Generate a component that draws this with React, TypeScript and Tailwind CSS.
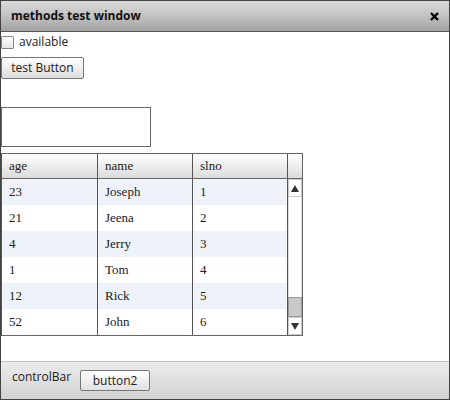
import React from "react";

const rows = [
  { age: "23", name: "Joseph", slno: "1" },
  { age: "21", name: "Jeena", slno: "2" },
  { age: "4", name: "Jerry", slno: "3" },
  { age: "1", name: "Tom", slno: "4" },
  { age: "12", name: "Rick", slno: "5" },
  { age: "52", name: "John", slno: "6" },
];

export default function App() {
  return (
    <div className="w-[450px] h-[400px] flex flex-col border border-[#444] bg-white font-['Open_Sans',sans-serif] text-[12px] text-[#222]">
      {/* title bar */}
      <div className="h-[31px] shrink-0 flex items-center justify-between pl-[10px] pr-[10px] border-b border-[#555] bg-gradient-to-b from-[#dadada] via-[#c2c2c2] to-[#a2a2a2]">
        <span className="font-bold text-[12px] text-[#111]">methods test window</span>
        <svg width="9" height="9" viewBox="0 0 9 9">
          <path d="M1 1 L8 8 M8 1 L1 8" stroke="#000" strokeWidth="2.4" />
        </svg>
      </div>

      {/* body */}
      <div className="flex-1 flex flex-col">
        <label className="flex items-center gap-[5px] mt-[2px] h-[16px]">
          <span className="w-[13px] h-[13px] border border-[#888] bg-gradient-to-b from-white to-[#e6e6e6] rounded-[1px]" />
          <span>available</span>
        </label>
        <button className="mt-[7px] w-[83px] h-[22px] border border-[#777] rounded-[2px] bg-gradient-to-b from-white to-[#dcdcdc] text-[12px] text-[#222] leading-none">
          test Button
        </button>
        <input className="mt-[28px] w-[150px] h-[40px] border border-[#666] outline-none" />

        {/* data grid */}
        <div className="mt-[6px] w-[302px] border border-[#666] border-l-[#555] flex flex-col font-['Liberation_Serif',serif] text-[13px] text-[#222]">
          <div className="flex h-[25px] border-b border-[#666] bg-gradient-to-b from-white to-[#dcdcdc]">
            <div className="w-[96px] border-r border-[#555] px-[7px] flex items-center">age</div>
            <div className="w-[95px] border-r border-[#555] px-[7px] flex items-center">name</div>
            <div className="w-[95px] border-r border-[#555] px-[7px] flex items-center">slno</div>
            <div className="flex-1" />
          </div>
          <div className="flex">
            <div className="flex-1 flex flex-col">
              {rows.map((r, i) => (
                <div key={r.slno} className={`flex h-[26px] ${i % 2 === 0 ? "bg-[#eef3fa]" : "bg-white"}`}>
                  <div className="w-[96px] border-r border-[#555] px-[7px] flex items-center">{r.age}</div>
                  <div className="w-[95px] border-r border-[#555] px-[7px] flex items-center">{r.name}</div>
                  <div className="w-[95px] border-r border-[#555] px-[7px] flex items-center">{r.slno}</div>
                </div>
              ))}
            </div>
            {/* scrollbar */}
            <div className="w-[14px] flex flex-col bg-white">
              <div className="h-[18px] border border-[#ccc] flex items-center justify-center">
                <svg width="8" height="7" viewBox="0 0 8 7"><path d="M4 0 L8 7 L0 7 Z" fill="#333" /></svg>
              </div>
              <div className="flex-1 border-x border-[#ddd]" />
              <div className="h-[20px] border border-[#999] bg-[#c8c8c8]" />
              <div className="h-[18px] border border-[#ccc] flex items-center justify-center">
                <svg width="8" height="7" viewBox="0 0 8 7"><path d="M0 0 L8 0 L4 7 Z" fill="#333" /></svg>
              </div>
            </div>
          </div>
        </div>
      </div>

      {/* control bar */}
      <div className="h-[38px] shrink-0 border-t border-[#bbb] bg-gradient-to-b from-[#ececec] to-[#d2d2d2] flex items-start pl-[11px] pt-[6px] gap-[9px]">
        <span className="leading-[18px]">controlBar</span>
        <button className="mt-[2px] w-[70px] h-[21px] border border-[#777] rounded-[2px] bg-gradient-to-b from-white to-[#e0e0e0] text-[12px] text-[#222] leading-none">
          button2
        </button>
      </div>
    </div>
  );
}
